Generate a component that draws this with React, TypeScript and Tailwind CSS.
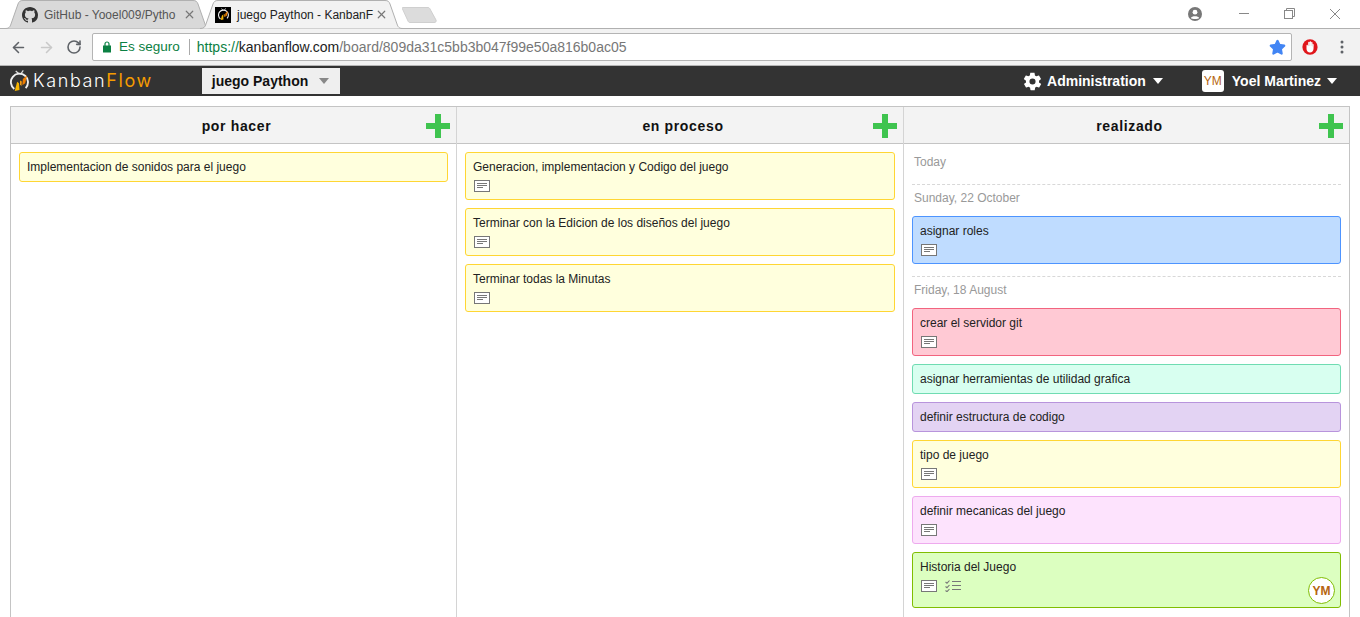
import React from "react";
import { ArrowLeft, ArrowRight, RotateCw, Star, X } from "lucide-react";

const Gh = () => (
  <svg viewBox="0 0 16 16" className="w-4 h-4 shrink-0" fill="#333">
    <path d="M8 0C3.58 0 0 3.58 0 8c0 3.54 2.29 6.53 5.47 7.59.4.07.55-.17.55-.38 0-.19-.01-.82-.01-1.49-2.01.37-2.53-.49-2.69-.94-.09-.23-.48-.94-.82-1.13-.28-.15-.68-.52-.01-.53.63-.01 1.08.58 1.23.82.72 1.21 1.87.87 2.33.66.07-.52.28-.87.51-1.07-1.78-.2-3.64-.89-3.64-3.95 0-.87.31-1.59.82-2.15-.08-.2-.36-1.02.08-2.12 0 0 .67-.21 2.2.82.64-.18 1.32-.27 2-.27.68 0 1.36.09 2 .27 1.53-1.04 2.2-.82 2.2-.82.44 1.1.16 1.92.08 2.12.51.56.82 1.27.82 2.15 0 3.07-1.87 3.75-3.65 3.95.29.25.54.73.54 1.48 0 1.07-.01 1.93-.01 2.2 0 .21.15.46.55.38A8.013 8.013 0 0016 8c0-4.42-3.58-8-8-8z" />
  </svg>
);

const KfIcon = ({ s = 20 }: { s?: number }) => (
  <svg viewBox="0 0 20 24" width={s} height={s * 1.2} className="shrink-0">
    <path d="M6 1 L10 4.5 M14 0.5 L11 4.5" stroke="#ddd" strokeWidth="1.3" fill="none" />
    <path d="M4.5 20 A9 9 0 1 1 16.5 19" fill="none" stroke="#eee" strokeWidth="2" />
    <path d="M5 22 L7.5 12.5 L9.5 14 L10 21 Z" fill="#f7b500" />
    <path d="M10.5 15 L10.5 11 L12.5 12 L12 17 Z" fill="#f39c12" />
    <path d="M13 16 L13.5 9.5 L18 5.5 L16 14 Z" fill="#ef7d00" />
  </svg>
);

const TabShape = ({ active, w }: { active: boolean; w: number }) => (
  <svg width={w} height={29} className="absolute left-0 top-0" viewBox={`0 0 ${w} 29`}>
    <path
      d={`M0 28.5 C4 28.5 5 27 6 24 L13 4 C14 1.5 15 0.5 18 0.5 L${w - 18} 0.5 C${w - 15} 0.5 ${w - 14} 1.5 ${w - 13} 4 L${w - 6} 24 C${w - 5} 27 ${w - 4} 28.5 ${w} 28.5`}
      fill={active ? "#f2f2f2" : "#d9d9d9"}
      stroke="#b0b0b0"
      strokeWidth="1"
    />
  </svg>
);

const Tab = ({ active, w, icon, title }: { active: boolean; w: number; icon: React.ReactNode; title: string }) => (
  <div className={`relative h-[29px] shrink-0 ${active ? "z-10 -ml-[11px] w-[203px]" : "-ml-[1px] w-[206px]"}`}>
    <TabShape active={active} w={w} />
    <div className={`relative flex h-full items-center pr-[15px] ${active ? "pl-[15px]" : "pl-[17px]"}`}>
      {icon}
      <span className={`ml-[6px] flex-1 whitespace-nowrap text-[12px] ${active ? "text-[#222]" : "text-[#555]"}`}>{title}</span>
      <X size={13} strokeWidth={2.2} className="text-[#777]" />
    </div>
  </div>
);

const NoteIcon = () => (
  <svg width="16" height="12" viewBox="0 0 16 12" className="shrink-0">
    <rect x="0.5" y="0.5" width="15" height="11" fill="#fff" stroke="#777" />
    <path d="M3 3.5H13M3 5.5H13M3 7.5H9" stroke="#777" strokeWidth="1" />
  </svg>
);

const ChecklistIcon = () => (
  <svg width="16" height="12" viewBox="0 0 16 12" className="shrink-0">
    <path d="M0.5 2L2 3.2L4.5 0.5M0.5 6.5L2 7.7L4.5 5M0.5 10.5L2 11.7L4.5 9" stroke="#777" strokeWidth="1.1" fill="none" />
    <path d="M7 1.5H16M7 5.5H16M7 9.5H16" stroke="#777" strokeWidth="1" />
  </svg>
);

const Plus = () => (
  <div className="relative h-6 w-6">
    <div className="absolute left-0 top-[9px] h-[6px] w-6 bg-[#3fc44f]" />
    <div className="absolute left-[9px] top-0 h-6 w-[6px] bg-[#3fc44f]" />
  </div>
);

type CardT = { t: string; note?: boolean; cl: string; check?: boolean; avatar?: boolean };

const Card = ({ c }: { c: CardT }) => (
  <div className={`relative rounded-[3px] border px-[7px] pt-[7px] text-[12px] leading-[14px] text-[#222] ${c.cl} ${c.avatar ? "h-[56px]" : c.note ? "h-[48px]" : "h-[30px]"}`}>
    <div>{c.t}</div>
    {c.note && (
      <div className="ml-px mt-[6px] flex items-center gap-2">
        <NoteIcon />
        {c.check && <ChecklistIcon />}
      </div>
    )}
    {c.avatar && (
      <div className="absolute bottom-[3px] right-[5px] flex h-[27px] w-[27px] items-center justify-center rounded-full border border-[#80bd01] bg-white text-[12px] font-bold text-[#b5650f]">YM</div>
    )}
  </div>
);

const Y = "bg-[#ffffdd] border-[#ffd633]";

const Header = ({ t }: { t: string }) => (
  <div className="relative flex h-[37px] items-center justify-center border-b border-[#c4c4c4] bg-[#f3f3f3] pl-[6px] pt-[2px] text-[14px] font-bold tracking-[0.65px] text-[#111]">
    {t}
    <div className="absolute right-[6px] top-[7px]"><Plus /></div>
  </div>
);

const DateLabel = ({ t, line }: { t: string; line?: boolean }) => (
  <div className={`${line ? "mt-3 border-t border-dashed border-[#d8d8d8] pb-[11px] pt-[6px]" : "pb-[3px] pt-[3px]"} pl-[2px] text-[12px] leading-[14px] text-[#999]`}>{t}</div>
);

export default function App() {
  return (
    <div className="h-[617px] w-[1360px] overflow-hidden bg-white [font-family:'Liberation_Sans',Arial,sans-serif]">
      {/* tab strip */}
      <div className="relative flex h-[29px] items-start bg-white pl-[6px]">
        <div className="absolute bottom-0 left-0 right-0 h-px bg-[#b0b0b0]" />
        <Tab active={false} w={206} icon={<Gh />} title="GitHub - Yooel009/Pytho" />
        <Tab active w={203} icon={
          <div className="flex h-4 w-4 items-center justify-center bg-black"><KfIcon s={11} /></div>
        } title="juego Paython - KanbanF" />
        <svg width="36" height="18" viewBox="0 0 36 18" className="-ml-px mt-[6px]">
          <path d="M1 1.5 H26 C27 1.5 27.5 2 28 3 L34 14 C34.5 15.5 34 16.5 32 16.5 H8 C7 16.5 6.5 16 6 15 L0.5 3 C0 2 0 1.5 1 1.5Z" fill="#dcdcdc" stroke="#cfcfcf" />
        </svg>
        <div className="absolute right-0 top-0 flex h-[27px] items-center">
          <svg width="14" height="14" viewBox="0 0 14 14" className="mr-[37px]">
            <circle cx="7" cy="7" r="7" fill="#777" />
            <circle cx="7" cy="5.2" r="2.4" fill="#fff" />
            <path d="M2.8 11 C3.6 8.8 10.4 8.8 11.2 11 C10 12.3 4 12.3 2.8 11Z" fill="#fff" />
          </svg>
          <svg width="10" height="1" viewBox="0 0 10 1" className="mr-[35px]"><path d="M0 0.5H10" stroke="#888" /></svg>
          <svg width="11" height="11" viewBox="0 0 11 11" className="mr-[34px]" fill="none" stroke="#888">
            <rect x="0.5" y="2.5" width="8" height="8" />
            <path d="M2.5 2.5V0.5H10.5V8.5H8.5" />
          </svg>
          <svg width="12" height="12" viewBox="0 0 12 12" className="mr-[19px]" stroke="#888"><path d="M1 1L11 11M11 1L1 11" /></svg>
        </div>
      </div>

      {/* toolbar */}
      <div className="flex h-[37px] items-center border-b border-[#b5b5b5] bg-[#f2f2f2] pl-[10px]">
        <ArrowLeft size={17} strokeWidth={2.2} className="text-[#5f6368]" />
        <ArrowRight size={17} strokeWidth={2.2} className="ml-[11px] text-[#c9c9c9]" />
        <RotateCw size={16} strokeWidth={2.4} className="ml-[11px] text-[#5f6368]" />
        <div className="ml-[10px] flex h-[28px] w-[1200px] items-center rounded-[2px] border border-[#b4b4b4] bg-white pl-[10px] pr-[5px] text-[14px]">
          <svg width="8" height="12" viewBox="0 0 8 12" className="shrink-0">
            <path d="M2 5V3a2 2 0 014 0V5" fill="none" stroke="#0b8043" strokeWidth="1.2" />
            <rect x="0" y="4.5" width="8" height="7" fill="#0b8043" />
          </svg>
          <span className="ml-[8px] text-[13.5px] text-[#0b8043]">Es seguro</span>
          <span className="ml-[9px] mr-[7px] h-[16px] w-px bg-[#aaa]" />
          <span className="text-[#0b8043]">https://</span>
          <span className="text-[#222]">kanbanflow.com</span>
          <span className="text-[#777]">/board/809da31c5bb3b047f99e50a816b0ac05</span>
          <span className="flex-1" />
          <Star size={17} fill="#4285f4" className="text-[#4285f4]" />
        </div>
        <svg width="16" height="16" viewBox="0 0 16 16" className="ml-[10px]">
          <ellipse cx="8" cy="8" rx="7.6" ry="7.8" fill="#e0161b" />
          <path d="M4.5 6.5V10C4.5 12 6 13.4 8 13.4C10 13.4 11.4 12 11.5 10L11.7 5.8C11.7 4.8 10.6 4.8 10.5 5.6V3.6C10.5 2.7 9.3 2.7 9.2 3.6V2.9C9.2 2 7.7 2 7.6 2.9V3.4C7.5 2.6 6.2 2.7 6.2 3.6V7.2L5.7 6.2C5.3 5.6 4.5 5.8 4.5 6.5Z" fill="#fff" />
          <path d="M7.6 3.4V7M9.2 3.6V7M10.5 5.6V7.5" stroke="#d8c8c8" strokeWidth="0.5" fill="none" />
        </svg>
        <svg width="4" height="14" viewBox="0 0 4 14" className="ml-[22px]" fill="#5f6368">
          <circle cx="2" cy="2" r="1.5" /><circle cx="2" cy="7" r="1.5" /><circle cx="2" cy="12" r="1.5" />
        </svg>
      </div>

      {/* navbar */}
      <div className="flex h-[30px] items-center bg-[#333333] pl-[10px] text-white">
        <KfIcon s={19} />
        <span className="ml-[4px] [font-family:Inter,sans-serif] text-[18px] font-light leading-none tracking-[1.6px]">Kanban</span>
        <span className="[font-family:Inter,sans-serif] text-[18px] font-normal leading-none tracking-[1.6px] text-[#f59c00]">Flow</span>
        <div className="ml-[49px] flex h-[26px] w-[138px] items-center bg-[#efefef] pl-[10px] text-[14px] font-bold text-[#111]">
          juego Paython
          <span className="ml-[11px] h-0 w-0 border-x-[5px] border-t-[6px] border-x-transparent border-t-[#888]" />
        </div>
        <div className="flex-1" />
        <svg width="21" height="21" viewBox="0 0 24 24" fill="#fff" className="mr-[4px]">
          <path fillRule="evenodd" d="M19.4 13c.1-.3.1-.7.1-1s0-.7-.1-1l2.1-1.6c.2-.2.2-.4.1-.6l-2-3.5c-.1-.2-.4-.3-.6-.2l-2.5 1c-.5-.4-1.1-.7-1.7-1l-.4-2.6c0-.3-.2-.5-.5-.5h-4c-.3 0-.5.2-.5.4l-.4 2.7c-.6.2-1.1.6-1.7 1l-2.5-1c-.2-.1-.5 0-.6.2l-2 3.5c-.1.2-.1.4.1.6L4.6 11c-.1.3-.1.7-.1 1s0 .7.1 1l-2.1 1.6c-.2.2-.2.4-.1.6l2 3.5c.1.2.4.3.6.2l2.5-1c.5.4 1.1.7 1.7 1l.4 2.6c0 .3.2.5.5.5h4c.3 0 .5-.2.5-.4l.4-2.7c.6-.2 1.1-.6 1.7-1l2.5 1c.2.1.5 0 .6-.2l2-3.5c.1-.2.1-.4-.1-.6L19.4 13zM12 15.5a3.5 3.5 0 110-7 3.5 3.5 0 010 7z" />
        </svg>
        <span className="text-[14px] font-bold">Administration</span>
        <span className="ml-[7px] h-0 w-0 border-x-[5px] border-t-[6px] border-x-transparent border-t-white" />
        <div className="ml-[39px] flex h-[22px] w-[22px] items-center justify-center rounded-[3px] bg-white text-[12px] text-[#b5650f]">YM</div>
        <span className="ml-[8px] text-[14px] font-bold">Yoel Martinez</span>
        <span className="ml-[6px] mr-[23px] h-0 w-0 border-x-[5px] border-t-[6px] border-x-transparent border-t-white" />
      </div>

      {/* board */}
      <div className="mx-[10px] mt-[10px] grid h-[600px] grid-cols-[446px_447px_445px] border border-[#c4c4c4]">
        <div className="flex flex-col border-r border-[#d4d4d4]">
          <Header t="por hacer" />
          <div className="flex flex-col gap-2 p-2">
            <Card c={{ t: "Implementacion de sonidos para el juego", cl: Y }} />
          </div>
        </div>
        <div className="flex flex-col border-r border-[#d4d4d4]">
          <Header t="en proceso" />
          <div className="flex flex-col gap-2 p-2">
            <Card c={{ t: "Generacion, implementacion y Codigo del juego", note: true, cl: Y }} />
            <Card c={{ t: "Terminar con la Edicion de los diseños del juego", note: true, cl: Y }} />
            <Card c={{ t: "Terminar todas la Minutas", note: true, cl: Y }} />
          </div>
        </div>
        <div className="flex flex-col">
          <Header t="realizado" />
          <div className="flex flex-col p-2">
            <DateLabel t="Today" />
            <DateLabel t="Sunday, 22 October" line />
            <Card c={{ t: "asignar roles", note: true, cl: "bg-[#bfdcff] border-[#4d94ff]" }} />
            <DateLabel t="Friday, 18 August" line />
            <div className="flex flex-col gap-2">
              <Card c={{ t: "crear el servidor git", note: true, cl: "bg-[#ffc9d4] border-[#f2647f]" }} />
              <Card c={{ t: "asignar herramientas de utilidad grafica", cl: "bg-[#d8fff0] border-[#6fdcb2]" }} />
              <Card c={{ t: "definir estructura de codigo", cl: "bg-[#e3d3f3] border-[#b894dc]" }} />
              <Card c={{ t: "tipo de juego", note: true, cl: Y }} />
              <Card c={{ t: "definir mecanicas del juego", note: true, cl: "bg-[#fde3fd] border-[#eeaaee]" }} />
              <Card c={{ t: "Historia del Juego", note: true, check: true, avatar: true, cl: "bg-[#dcffc0] border-[#80bd01]" }} />
            </div>
          </div>
        </div>
      </div>
    </div>
  );
}
